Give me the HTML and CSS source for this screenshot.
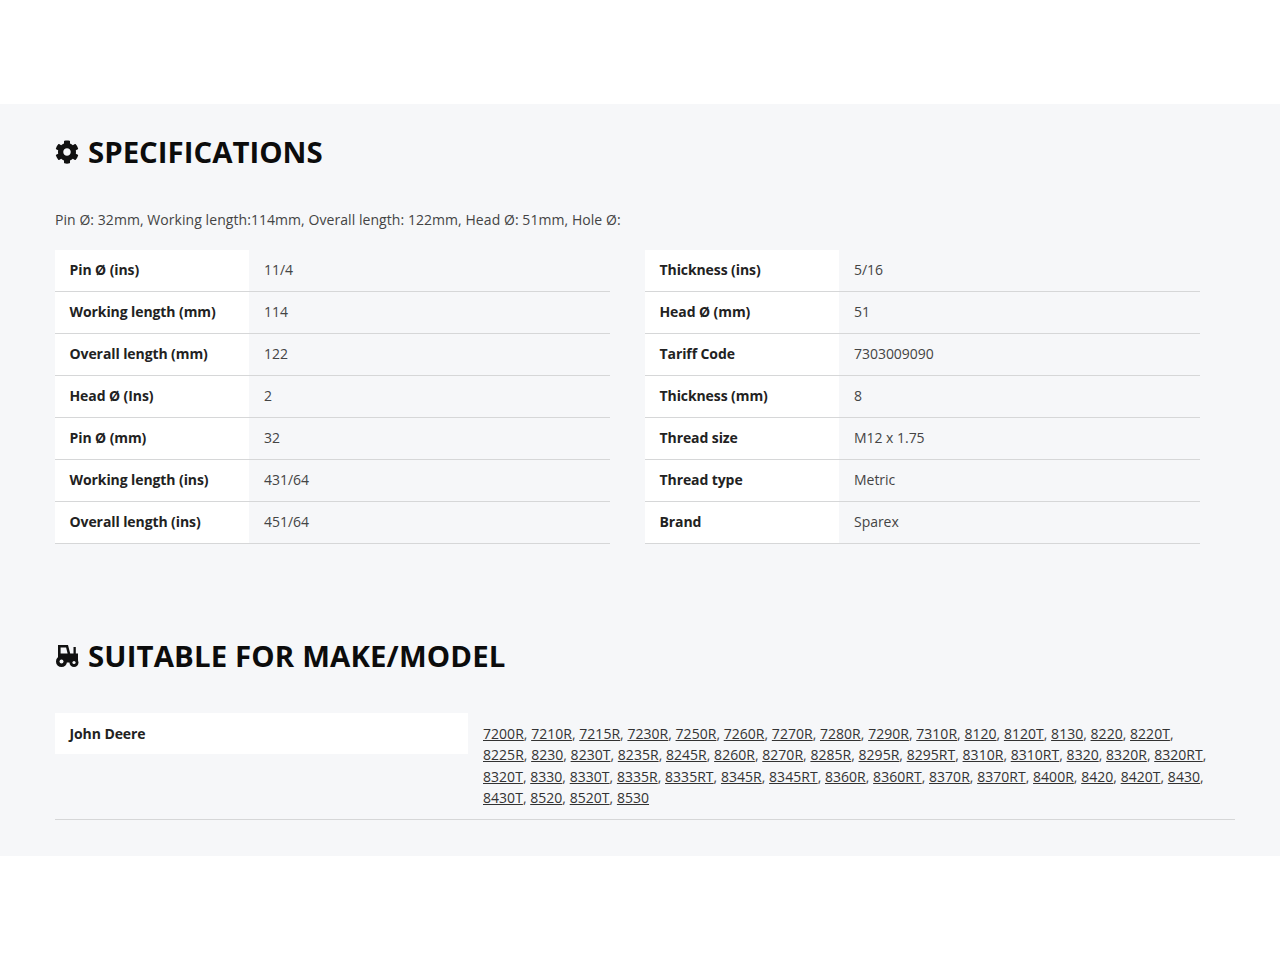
FILE: index.html
```html
<!DOCTYPE html>
<html lang="en">
<head>
<meta charset="utf-8">
<title>Specifications</title>
<link rel="stylesheet" href="styles.css">
</head>
<body>
<main class="panel">
  <h2 class="heading heading-spec">
    <svg class="icon" viewBox="0 0 512 512"><path d="M487.4 315.7l-42.6-24.6c4.3-23.2 4.3-47 0-70.2l42.6-24.6c4.9-2.8 7.1-8.6 5.5-14-11.1-35.6-30-67.8-54.7-94.6-3.8-4.1-10-5.1-14.8-2.3L380.8 110c-17.9-15.4-38.5-27.3-60.8-35.1V25.8c0-5.6-3.9-10.5-9.4-11.7-36.7-8.2-74.3-7.8-109.2 0-5.5 1.2-9.4 6.1-9.4 11.7V75c-22.2 7.9-42.8 19.8-60.8 35.1L88.7 85.5c-4.9-2.8-11-1.9-14.8 2.3-24.7 26.7-43.6 58.9-54.7 94.6-1.7 5.4.6 11.2 5.5 14L67.3 221c-4.3 23.2-4.3 47 0 70.2l-42.6 24.6c-4.9 2.8-7.1 8.6-5.5 14 11.1 35.6 30 67.8 54.7 94.6 3.8 4.1 10 5.1 14.8 2.3l42.6-24.6c17.9 15.4 38.5 27.3 60.8 35.1v49.2c0 5.6 3.9 10.5 9.4 11.7 36.7 8.2 74.3 7.8 109.2 0 5.5-1.2 9.4-6.1 9.4-11.7v-49.2c22.2-7.9 42.8-19.8 60.8-35.1l42.6 24.6c4.9 2.8 11 1.9 14.8-2.3 24.7-26.7 43.6-58.9 54.7-94.6 1.5-5.5-.7-11.3-5.6-14.1zM256 336c-44.1 0-80-35.9-80-80s35.9-80 80-80 80 35.9 80 80-35.9 80-80 80z"/></svg>
    <span>SPECIFICATIONS</span>
  </h2>
  <p class="summary">Pin Ø: 32mm, Working length:114mm, Overall length: 122mm, Head Ø: 51mm, Hole Ø:</p>
  <div class="spec-columns">
    <dl class="spec-table">
      <div class="row"><dt>Pin Ø (ins)</dt><dd>11/4</dd></div>
      <div class="row"><dt>Working length (mm)</dt><dd>114</dd></div>
      <div class="row"><dt>Overall length (mm)</dt><dd>122</dd></div>
      <div class="row"><dt>Head Ø (Ins)</dt><dd>2</dd></div>
      <div class="row"><dt>Pin Ø (mm)</dt><dd>32</dd></div>
      <div class="row"><dt>Working length (ins)</dt><dd>431/64</dd></div>
      <div class="row"><dt>Overall length (ins)</dt><dd>451/64</dd></div>
    </dl>
    <dl class="spec-table">
      <div class="row"><dt>Thickness (ins)</dt><dd>5/16</dd></div>
      <div class="row"><dt>Head Ø (mm)</dt><dd>51</dd></div>
      <div class="row"><dt>Tariff Code</dt><dd>7303009090</dd></div>
      <div class="row"><dt>Thickness (mm)</dt><dd>8</dd></div>
      <div class="row"><dt>Thread size</dt><dd>M12 x 1.75</dd></div>
      <div class="row"><dt>Thread type</dt><dd>Metric</dd></div>
      <div class="row"><dt>Brand</dt><dd>Sparex</dd></div>
    </dl>
  </div>
  <h2 class="heading heading-fit">
    <svg class="icon" viewBox="0 0 24 24">
      <path fill-rule="evenodd" d="M3 1h10l2.200 8.500H18.500V3h2.300v6.500H23v9H3zM5.600 3.500v6h7l-1.500-6z"/>
      <circle cx="6.500" cy="17.500" r="5.500"/>
      <circle class="icon-hole" cx="6.500" cy="17.500" r="2"/>
      <circle cx="19" cy="18.500" r="4.500"/>
      <circle class="icon-hole" cx="19" cy="18.500" r="1.600"/>
    </svg>
    <span>SUITABLE FOR MAKE/MODEL</span>
  </h2>
  <div class="fit">
    <div class="fit-make">John Deere</div>
    <div class="fit-models"><a href="#">7200R</a>, <a href="#">7210R</a>, <a href="#">7215R</a>, <a href="#">7230R</a>, <a href="#">7250R</a>, <a href="#">7260R</a>, <a href="#">7270R</a>, <a href="#">7280R</a>, <a href="#">7290R</a>, <a href="#">7310R</a>, <a href="#">8120</a>, <a href="#">8120T</a>, <a href="#">8130</a>, <a href="#">8220</a>, <a href="#">8220T</a>, <a href="#">8225R</a>, <a href="#">8230</a>, <a href="#">8230T</a>, <a href="#">8235R</a>, <a href="#">8245R</a>, <a href="#">8260R</a>, <a href="#">8270R</a>, <a href="#">8285R</a>, <a href="#">8295R</a>, <a href="#">8295RT</a>, <a href="#">8310R</a>, <a href="#">8310RT</a>, <a href="#">8320</a>, <a href="#">8320R</a>, <a href="#">8320RT</a>, <a href="#">8320T</a>, <a href="#">8330</a>, <a href="#">8330T</a>, <a href="#">8335R</a>, <a href="#">8335RT</a>, <a href="#">8345R</a>, <a href="#">8345RT</a>, <a href="#">8360R</a>, <a href="#">8360RT</a>, <a href="#">8370R</a>, <a href="#">8370RT</a>, <a href="#">8400R</a>, <a href="#">8420</a>, <a href="#">8420T</a>, <a href="#">8430</a>, <a href="#">8430T</a>, <a href="#">8520</a>, <a href="#">8520T</a>, <a href="#">8530</a></div>
  </div>
</main>
</body>
</html>
```
FILE: styles.css
```css
* { box-sizing: border-box; }
html, body { margin: 0; background: #fff; }
body {
  height: 960px;
  padding-top: 104px;
  font-family: "Open Sans", "Liberation Sans", sans-serif;
  font-size: 14px;
  color: #444;
  overflow: hidden;
}
.panel {
  height: 752px;
  background: #f6f7f9;
  padding: 28px 45px 0 55px;
}
.heading {
  display: flex;
  align-items: center;
  gap: 9px;
  margin: 0;
  height: 40px;
  font-size: 29.4px;
  font-weight: 700;
  line-height: 40px;
  color: #0c0c0c;
}
.icon { width: 24px; height: 24px; flex: none; fill: #111; }
.icon-hole { fill: #f6f7f9; }
.summary { margin: 0; padding-top: 38px; height: 78px; line-height: 20px; letter-spacing: .06px; }
.spec-columns { display: flex; gap: 35px; }
.spec-table { width: 555px; margin: 0; }
.row {
  display: grid;
  grid-template-columns: 194px 1fr;
  height: 42px;
  border-bottom: 1px solid #d6d7d8;
}
.row dt, .row dd { margin: 0; padding-top: 10px; line-height: 20px; }
.row dt { background: #fff; padding-left: 14.5px; font-weight: 700; color: #222; letter-spacing: -.09px; }
.row dd { padding-left: 15px; letter-spacing: -.03px; }
.heading-fit { margin-top: 92px; letter-spacing: .13px; }
.fit {
  display: grid;
  grid-template-columns: 413px 1fr;
  margin-top: 37px;
  height: 107px;
  border-bottom: 1px solid #d6d7d8;
}
.fit-make {
  height: 41px;
  background: #fff;
  padding: 10.5px 0 0 14.5px;
  line-height: 20px;
  font-weight: 700;
  color: #222;
  letter-spacing: -.09px;
}
.fit-models { padding: 10px 20px 0 15px; line-height: 21.3px; letter-spacing: .03px; }
.fit-models a { color: #333; text-decoration: underline; }
```
